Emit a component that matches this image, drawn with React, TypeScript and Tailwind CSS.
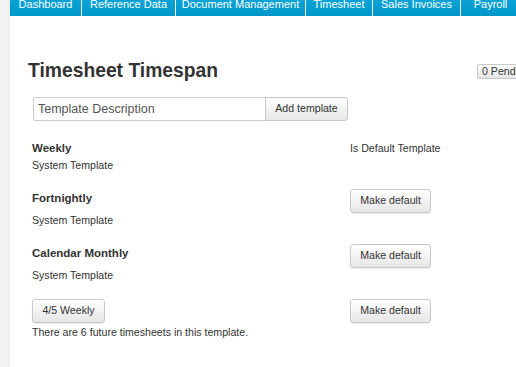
const tabs = [
  { label: "Dashboard", w: "w-[71px]" },
  { label: "Reference Data", w: "w-[94px]" },
  { label: "Document Management", w: "w-[130px]" },
  { label: "Timesheet", w: "w-[67px]" },
  { label: "Sales Invoices", w: "w-[88px]" },
  { label: "Payroll", w: "w-[60px]" },
];

function Btn({ children, className = "" }: { children: React.ReactNode; className?: string }) {
  return (
    <button
      className={
        "h-[24px] rounded-[3px] border border-[#c8c8c8] bg-gradient-to-b from-white to-[#e6e6e6] text-[10.6px] text-[#333] shadow-[0_1px_1px_rgba(0,0,0,0.08)] " +
        className
      }
    >
      {children}
    </button>
  );
}

function TemplateRow({
  title,
  sub,
  isDefault,
  asButton,
}: {
  title: string;
  sub: string;
  isDefault?: boolean;
  asButton?: boolean;
}) {
  return (
    <div className="flex mb-[15px]">
      <div className="w-[318px]">
        {asButton ? (
          <Btn className="w-[73px]">{title}</Btn>
        ) : (
          <div className={"flex items-center font-bold text-[11.5px] " + (isDefault ? "h-[15px]" : "h-[24px]")}>
            {title}
          </div>
        )}
        <div className="mt-[2px] leading-[14px] text-[10.6px]">{sub}</div>
      </div>
      <div>
        {isDefault ? (
          <div className="h-[15px] flex items-center text-[10.6px]">Is Default Template</div>
        ) : (
          <Btn className="w-[81px]">Make default</Btn>
        )}
      </div>
    </div>
  );
}

export default function App() {
  return (
    <div className="flex w-[516px] h-[367px] overflow-hidden bg-white text-[#333] font-['Liberation_Sans',Arial,sans-serif]">
      <div className="w-[10px] shrink-0 bg-[#f3f3f3] border-r border-[#e6e6e6]" />
      <div className="flex-1 min-w-0">
        {/* top nav, scrolled so the labels sit half off the top */}
        <div className="flex h-[16px] bg-gradient-to-b from-[#0aa3d6] to-[#0095c8] overflow-hidden">
          {tabs.map((t, i) => (
            <div
              key={t.label}
              className={"shrink-0 text-center text-white text-[11px] leading-[9px] whitespace-nowrap " + t.w + (i > 0 ? " border-l border-white" : "")}
            >
              {t.label}
            </div>
          ))}
        </div>

        <div className="flex items-center justify-between mt-[43px] h-[24px] pl-[18px]">
          <h1 className="font-bold text-[19.3px] leading-[24px] text-[#333]">Timesheet Timespan</h1>
          <button className="h-[15px] w-[60px] shrink-0 -mr-[21px] rounded-[2px] border border-[#c8c8c8] bg-gradient-to-b from-white to-[#e6e6e6] text-[10.6px] text-left pl-[4px] leading-[13px] text-[#333]">
            0 Pending
          </button>
        </div>

        <div className="flex mt-[14px] ml-[23px]">
          <input
            placeholder="Template Description"
            className="w-[233px] h-[24px] border border-[#ccc] rounded-l-[2px] px-[4px] text-[12.5px] placeholder:text-[#555] outline-none"
          />
          <button className="w-[83px] h-[24px] -ml-px border border-[#c8c8c8] rounded-r-[3px] bg-gradient-to-b from-white to-[#e6e6e6] text-[10.6px] text-[#333]">
            Add template
          </button>
        </div>

        <div className="mt-[20px] ml-[22px]">
          <TemplateRow title="Weekly" sub="System Template" isDefault />
          <TemplateRow title="Fortnightly" sub="System Template" />
          <TemplateRow title="Calendar Monthly" sub="System Template" />
          <TemplateRow title="4/5 Weekly" sub="There are 6 future timesheets in this template." asButton />
        </div>
      </div>
    </div>
  );
}
